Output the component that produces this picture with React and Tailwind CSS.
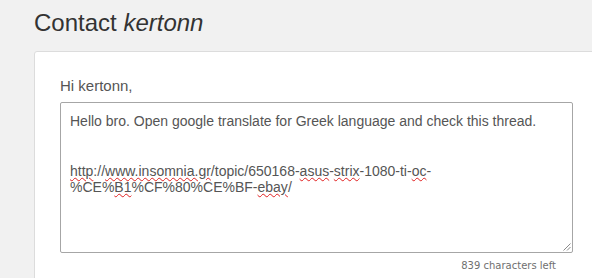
export default function App() {
  const sq = "underline decoration-wavy decoration-[#e02020] decoration-1 underline-offset-[1px]";

  return (
    <div className="w-[592px] h-[278px] overflow-hidden bg-[#f1f1f1] pl-[34px] pt-[9px] font-['Liberation_Sans',Arial,sans-serif]">
      <h1 className="text-[24px] leading-[28px] text-[#333]">
        Contact <em>kertonn</em>
      </h1>

      {/* Card */}
      <div className="mt-[14px] w-[620px] h-[300px] bg-white border border-[#dcdcdc] rounded-[3px] pl-[25px] pt-[25px]">
        <p className="text-[15px] leading-[17px] text-[#555]">Hi kertonn,</p>

        {/* Message box */}
        <div className="relative mt-[8px] w-[513px] h-[151px] border border-[#a6a6a6] rounded-[2px] pl-[9px] pt-[10px] text-[14px] leading-[16px] text-[#555] whitespace-nowrap">
          <div>Hello bro. Open google translate for Greek language and check this thread.</div>
          <div className="h-[34px]" />
          <div>
            <span className={sq}>http</span>://<span className={sq}>www.insomnia.gr</span>/topic/650168-<span className={sq}>asus</span>-<span className={sq}>strix</span>-1080-ti-<span className={sq}>oc</span>-
          </div>
          <div>
            %CE%<span className={sq}>B1</span>%CF%80%CE%BF-<span className={sq}>ebay</span>/
          </div>
          <svg className="absolute right-[1px] bottom-[1px]" width="9" height="9" viewBox="0 0 9 9">
            <path d="M8.5 1.5 1.5 8.5M8.5 5 5 8.5" stroke="#8a8a8a" strokeWidth="1" fill="none" />
          </svg>
        </div>

        <div className="w-[513px] mt-[7px] pr-[17px] text-right text-[10px] leading-[12px] text-[#6f6f6f] font-['DejaVu_Sans',Verdana,sans-serif]">
          839 characters left
        </div>
      </div>
    </div>
  );
}
